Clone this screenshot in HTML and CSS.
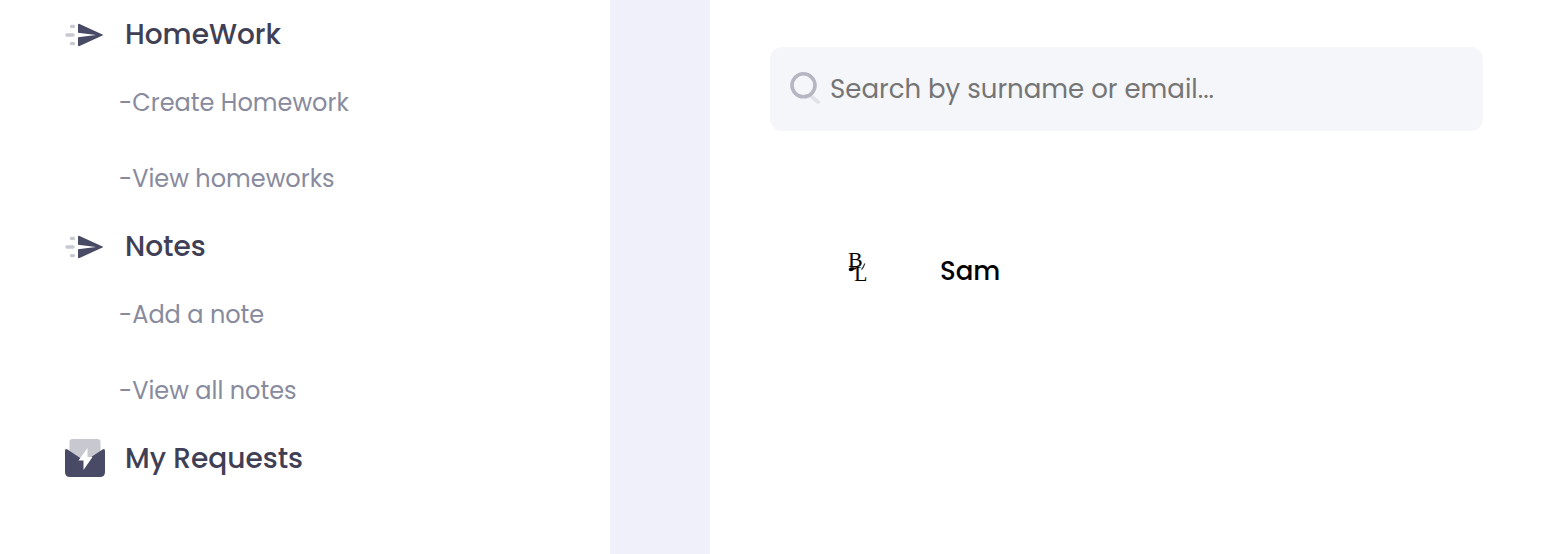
FILE: index.html
```html
<!DOCTYPE html>
<html lang="en">
<head>
    <meta charset="UTF-8">
    <meta name="viewport" content="width=device-width, initial-scale=1.0">
    <title>Students</title>
    <link rel="stylesheet" href="styles.css">
</head>
<body>
    <!-- Shared menu icon -->
    <svg class="symbols" aria-hidden="true">
        <symbol id="icon-send" viewBox="0 0 40 40">
            <path d="M14 8.8 L37.5 19.4 Q38.5 20 37.5 20.6 L14 31.2 Q13 31.2 13 30.2 V22.3 L31 20 L13 17.7 V9.8 Q13 8.8 14 8.8 Z" fill="#494b66"/>
            <path d="M2 20 H8 M6.5 11.4 H8.5 M6.5 28.6 H8.5" fill="none" stroke="#c8c8d1" stroke-width="3.4" stroke-linecap="round"/>
        </symbol>
    </svg>

    <div class="page">
        <nav class="sidebar">
            <a class="menu-title" href="#">
                <svg class="menu-icon" aria-hidden="true"><use href="#icon-send"/></svg>
                <span>HomeWork</span>
            </a>
            <a class="menu-link" href="#">-Create Homework</a>
            <a class="menu-link" href="#">-View homeworks</a>

            <a class="menu-title" href="#">
                <svg class="menu-icon" aria-hidden="true"><use href="#icon-send"/></svg>
                <span>Notes</span>
            </a>
            <a class="menu-link" href="#">-Add a note</a>
            <a class="menu-link" href="#">-View all notes</a>

            <a class="menu-title" href="#">
                <svg class="menu-icon" viewBox="0 1 40 40" aria-hidden="true">
                    <path d="M4.5 22 V4 Q4.5 1 7.5 1 H32.5 Q35.5 1 35.5 4 V22 L20 32 Z" fill="#c8c8d1"/>
                    <path d="M0 13 Q0 10 2.5 11.5 L16 20.5 Q20 23 24 20.5 L37.5 11.5 Q40 10 40 13 V34 Q40 39 35 39 H5 Q0 39 0 34 Z" fill="#494b66"/>
                    <path d="M22.5 10 L13.5 22.5 H18.5 V32 L27.5 19 H22.5 Z" fill="#fff"/>
                </svg>
                <span>My Requests</span>
            </a>
        </nav>

        <main class="content">
            <label class="search">
                <svg class="search-icon" viewBox="0 0 30 34" aria-hidden="true">
                    <path d="M21.5 24.5 L28 30" fill="none" stroke="#e1e2e8" stroke-width="4" stroke-linecap="round"/>
                    <circle cx="13.5" cy="13.3" r="11.5" fill="none" stroke="#b6b6c3" stroke-width="3.6"/>
                </svg>
                <input class="search-input" type="text" placeholder="Search by surname or email..." aria-label="Search by surname or email">
            </label>

            <a class="user" href="#">
                <svg class="user-logo" viewBox="0 0 20 40">
                    <text class="logo-letter" x="0" y="16">B</text>
                    <text class="logo-letter" x="6" y="30">L</text>
                    <path d="M9 18 C6 15.5 2 16 1 17.5 C-0.5 20 4 21.5 6 18.5 Z" fill="#000"/>
                    <path d="M16.8 12.5 C16 14 15.8 16.5 13.5 18.5" fill="none" stroke="#333" stroke-width="1.2"/>
                </svg>
                <span class="user-name">Sam</span>
            </a>
        </main>
    </div>
</body>
</html>
```
FILE: styles.css
```css
* {
    box-sizing: border-box;
}
body {
    margin: 0;
    background-color: #fff;
    font-family: Poppins, Inter, sans-serif;
}
a {
    color: inherit;
    text-decoration: none;
}
.symbols {
    display: none;
}
.page {
    display: flex;
    min-height: 100vh;
    background-color: #f0f0fa;
}

/* Sidebar */
.sidebar {
    flex: 0 0 610px;
    padding: 5px 65px;
    background-color: #fff;
}
.menu-title {
    display: flex;
    align-items: center;
    gap: 20px;
    height: 60px;
    color: #3f4055;
    font-size: 28px;
    font-weight: 500;
}
.menu-icon {
    width: 40px;
    height: 40px;
}
.menu-link {
    display: block;
    padding-left: 54px;
    color: #888a9e;
    font-size: 24px;
    line-height: 76px;
}

/* Content */
.content {
    flex: 1;
    margin-left: 100px;
    padding: 47px 67px 47px 60px;
    background-color: #fff;
}
.search {
    display: flex;
    align-items: center;
    gap: 10px;
    height: 84px;
    padding: 0 20px;
    border-radius: 12px;
    background-color: #f4f6fa;
}
.search-icon {
    width: 30px;
    height: 34px;
}
.search-input {
    flex: 1;
    min-width: 0;
    padding: 0;
    border: 0;
    outline: 0;
    background: none;
    color: #3f4055;
    font-family: inherit;
    font-size: 26px;
    font-weight: 400;
}
.search-input::placeholder {
    color: #757575;
    opacity: 1;
}
.user {
    display: flex;
    align-items: center;
    gap: 72px;
    margin-top: 100px;
    padding: 20px 78px;
    color: #000;
    font-size: 26px;
    font-weight: 500;
    line-height: 40px;
}
.user-logo {
    width: 20px;
    height: 40px;
    overflow: visible;
}
.logo-letter {
    font-family: "Liberation Serif", serif;
    font-size: 22px;
    font-weight: 400;
}
```
